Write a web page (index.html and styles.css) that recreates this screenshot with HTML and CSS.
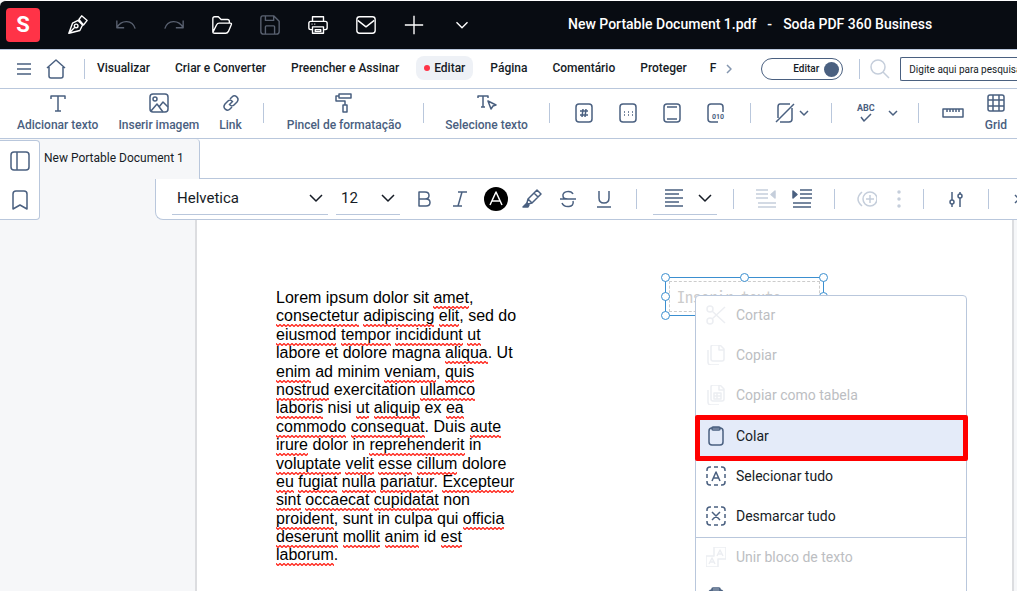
FILE: index.html
```html
<!DOCTYPE html>
<html lang="pt">

<head>
	<meta charset="UTF-8">
	<meta name="viewport" content="width=device-width, initial-scale=1">
	<title>New Portable Document 1.pdf - Soda PDF 360 Business</title>
	<link rel="stylesheet" href="styles.css">
</head>

<body>
	<header class="titlebar">
		<div class="logo">S</div>
		<div class="quick">
			<button aria-label="Assinar"><svg viewBox="0 0 24 24"><path d="M2 21l4-11 6-3 5 5-3 6zM2 21l6-6M13 6l3-4 6 5-4 5z" /><circle cx="10" cy="13" r="2" /></svg></button>
			<button class="off" aria-label="Desfazer"><svg viewBox="0 0 24 24"><path d="M2 7v8h8M2 15C7 6 19 6 22 16" /></svg></button>
			<button class="off" aria-label="Refazer"><svg viewBox="0 0 24 24"><path d="M22 7v8h-8M22 15C17 6 5 6 2 16" /></svg></button>
			<button aria-label="Abrir"><svg viewBox="0 0 24 24"><path d="M2 20V5q0-2 2-2h4l3 3h7q2 0 2 2v2M2 20l4-8q1-2 3-2h12q2 0 1 2l-3 7q-1 2-3 2H4q-2 0-2-1" /></svg></button>
			<button class="off" aria-label="Salvar"><svg viewBox="0 0 24 24"><path d="M4 2h12l6 6v11q0 3-3 3H5q-3 0-3-3V5q0-3 2-3zM7 2v5h9V2M7 22v-8q0-1 1-1h8q1 0 1 1v8" /></svg></button>
			<button aria-label="Imprimir"><svg viewBox="0 0 24 24"><path d="M6 8V3h12v5M6 17H4q-2 0-2-2v-5q0-2 2-2h16q2 0 2 2v5q0 2-2 2h-2M6 14h12v7H6zM9 17h6v2H9zM5 11h1M8 11h1" /></svg></button>
			<button aria-label="E-mail"><svg viewBox="0 0 24 24"><rect x="2" y="3" width="20" height="18" rx="3" /><path d="M3 7l9 7 9-7" /></svg></button>
			<button aria-label="Novo"><svg viewBox="0 0 24 24"><path d="M12 2v20M2 12h20" /></svg></button>
			<button aria-label="Mais"><svg viewBox="0 0 24 24"><path d="M6 9l6 6 6-6" /></svg></button>
		</div>
		<div class="title"><span>New Portable Document 1.pdf</span><span>-</span><span>Soda PDF 360 Business</span></div>
	</header>

	<nav class="menubar">
		<button class="tool menu-btn" aria-label="Menu"><svg viewBox="0 0 20 20"><path d="M3 5h14M3 10h14M3 15h14" /></svg></button>
		<button class="tool home-btn" aria-label="Início"><svg viewBox="0 0 20 20"><path d="M1 9l9-8 9 8M3 8v9q0 2 2 2h10q2 0 2-2V8" /></svg></button>
		<span class="sep"></span>
		<div class="menus">
			<a href="#">Visualizar</a>
			<a href="#">Criar e Converter</a>
			<a href="#">Preencher e Assinar</a>
			<a href="#" class="current">Editar</a>
			<a href="#">Página</a>
			<a href="#">Comentário</a>
			<a href="#">Proteger</a>
			<a href="#">F</a>
		</div>
		<button class="tool more" aria-label="Próximo"><svg viewBox="0 0 8 20"><path d="M1 6l4 4-4 4" /></svg></button>
		<label class="switch">Editar<input type="checkbox" checked></label>
		<span class="sep"></span>
		<label class="search" for="search"><svg viewBox="0 0 20 20"><circle cx="8" cy="8" r="7" /><path d="M13 13l6 6" /></svg></label>
		<input id="search" class="search-box" type="text" placeholder="Digite aqui para pesquisar">
	</nav>

	<div class="toolbar">
		<button class="labelled"><svg viewBox="0 0 20 20"><path d="M3 6V3h14v3M10 3v15M7 18h6" /></svg>Adicionar texto</button>
		<button class="labelled"><svg viewBox="0 0 20 20"><rect x="1" y="1" width="18" height="18" rx="3" /><circle cx="6" cy="6" r="2" /><path d="M2 18l6-7 6 8M10 14l4-5 5 5" /></svg>Inserir imagem</button>
		<button class="labelled"><svg viewBox="0 0 20 20"><path d="M9 6l2-2c3-3 8 1 5 5l-3 3c-1 1-3 1-4 0M11 14l-2 2c-3 3-8-1-5-5l3-3c1-1 3-1 4 0M8 12l4-4" /></svg>Link</button>
		<span class="sep"></span>
		<button class="labelled wide"><svg viewBox="0 0 20 20"><path d="M5 1h12v4H5zM5 3H2v5h9v4M9 12h4v7H9z" /></svg>Pincel de formatação</button>
		<span class="sep"></span>
		<button class="labelled"><svg viewBox="0 0 20 20"><path d="M1 5V3h10v2M6 3v11M4 14h4M11 8l8 4-3 1-2 3z" /></svg>Selecione texto</button>
		<span class="sep"></span>
		<div class="page-tools">
			<button aria-label="Número de página"><svg viewBox="0 0 20 20"><rect x="2" y="1" width="16" height="18" rx="3" /><path d="M9 6l-1 8M12 6l-1 8M6 8h8M6 12h8" /></svg></button>
			<button aria-label="Marca d'água"><svg viewBox="0 0 20 20"><rect x="2" y="1" width="16" height="18" rx="3" /><path class="dots" d="M6 9h9M6 12h9" /></svg></button>
			<button aria-label="Cabeçalho e rodapé"><svg viewBox="0 0 20 20"><rect x="2" y="1" width="16" height="18" rx="3" /><path d="M5 4h10M5 16h10" /></svg></button>
			<button aria-label="Numeração Bates"><svg viewBox="0 0 20 20"><path d="M17 9V4q0-3-3-3H5Q2 1 2 4v12q0 3 3 3h7" /><text x="6" y="16">010</text></svg></button>
		</div>
		<span class="sep"></span>
		<button class="with-arrow" aria-label="Fundo"><svg viewBox="0 0 20 20"><path d="M1 19L19 1M15 1H5Q3 1 3 4v11M17 5v11q0 3-3 3H5" /></svg><svg class="arrow" viewBox="0 0 10 10"><path d="M1 3l4 4 4-4" /></svg></button>
		<span class="sep"></span>
		<button class="with-arrow spelling" aria-label="Ortografia"><svg viewBox="0 0 20 20"><text x="1" y="8" class="abc">ABC</text><path d="M5 14l3 4 7-7" /></svg><svg class="arrow" viewBox="0 0 10 10"><path d="M1 3l4 4 4-4" /></svg></button>
		<span class="sep"></span>
		<button class="ruler" aria-label="Régua"><svg viewBox="0 0 22 20"><path d="M1 6h20v8H1zM5 6v3M8 6v3M11 6v3M14 6v3M17 6v3" /></svg></button>
		<button class="labelled grid-btn"><svg viewBox="0 0 20 20"><rect x="2" y="2" width="16" height="16" rx="2" /><path d="M7 2v16M13 2v16M2 7h16M2 13h16" /></svg>Grid</button>
	</div>

	<main class="workspace">
		<aside class="side">
			<button aria-label="Painel"><svg viewBox="0 0 20 20"><rect x="1" y="1" width="18" height="18" rx="3" /><path d="M7 1v18" /></svg></button>
			<button aria-label="Marcadores"><svg viewBox="0 0 20 20"><path d="M3 19V4q0-3 3-3h8q3 0 3 3v15l-7-4z" /></svg></button>
		</aside>
		<div class="main">
			<div class="tabs">
				<a href="#" class="tab">New Portable Document 1</a>
				<div class="tabs-rest"></div>
			</div>
			<div class="format">
				<label class="pick font"><select aria-label="Fonte"><option>Helvetica</option></select><svg viewBox="0 0 14 14"><path d="M1 4l6 6 6-6" /></svg></label>
				<label class="pick size"><select aria-label="Tamanho"><option>12</option></select><svg viewBox="0 0 14 14"><path d="M1 4l6 6 6-6" /></svg></label>
				<div class="styles">
					<button aria-label="Negrito"><svg viewBox="0 0 20 20"><path d="M5 3h6q4 0 4 3.500T11 10H5zM5 10h7q4 0 4 3.500T12 17H5z" /></svg></button>
					<button aria-label="Itálico"><svg viewBox="0 0 20 20"><path d="M8 3h9M3 17h9M12 3L8 17" /></svg></button>
					<button aria-label="Cor do texto"><svg class="color" viewBox="0 0 24 24"><circle cx="12" cy="12" r="12" /><path d="M6 18l6-13 6 13M8 14h8" /></svg></button>
					<button aria-label="Realce"><svg viewBox="0 0 20 20"><path d="M6 10l9-9 4 4-9 9zM6 10l-1 4 1 1 4-1M12 4l4 4" /><path class="solid" d="M1 18l4-4 2 2-1 2z" /></svg></button>
					<button aria-label="Tachado"><svg viewBox="0 0 20 20"><path d="M15 5c-2-4-11-3-10 2 0 2 2 3 5 3M15 12c2 7-9 7-11 2M2 10h16" /></svg></button>
					<button aria-label="Sublinhado"><svg viewBox="0 0 20 20"><path d="M5 2v7q0 5 5 5t5-5V2M3 18h14" /></svg></button>
				</div>
				<span class="sep"></span>
				<button class="pick align" aria-label="Alinhar"><svg class="lines" viewBox="0 0 20 20"><path d="M1 2h18M1 6h14M1 10h18M1 14h14M1 18h18" /></svg><svg viewBox="0 0 14 14"><path d="M1 4l6 6 6-6" /></svg></button>
				<span class="sep"></span>
				<div class="styles">
					<button class="faded" aria-label="Diminuir recuo"><svg viewBox="0 0 20 20"><path d="M0 1h12M0 5h12M0 9h12M2 14h18M2 18h18" /><path class="solid" d="M19 2v7l-4-3.500z" /></svg></button>
					<button aria-label="Aumentar recuo"><svg viewBox="0 0 20 20"><path d="M8 1h12M8 5h12M8 9h12M1 14h18M1 18h18" /><path class="solid" d="M1 2v7l4-3.500z" /></svg></button>
				</div>
				<span class="sep"></span>
				<div class="styles extra">
					<button class="faded" aria-label="Adicionar"><svg viewBox="0 0 20 20"><circle cx="13" cy="10" r="7" /><path d="M13 6v8M9 10h8M5 3q-8 7 0 14" /></svg></button>
					<button class="faded" aria-label="Opções"><svg viewBox="0 0 20 20"><g class="solid"><circle cx="10" cy="3" r="1" /><circle cx="10" cy="10" r="1" /><circle cx="10" cy="17" r="1" /></g></svg></button>
				</div>
				<span class="sep"></span>
				<button class="sliders" aria-label="Propriedades"><svg viewBox="0 0 20 20"><path d="M6 3v8M6 15v3M14 3v2M14 9v9" /><circle cx="6" cy="13" r="2" /><circle cx="14" cy="7" r="2" /></svg></button>
				<span class="sep"></span>
				<button class="overflow" aria-label="Mais opções"><svg viewBox="0 0 20 20"><path d="M1 6l4 4-4 4M7 6l4 4-4 4" /></svg></button>
			</div>
			<article class="page">
				<p class="text">Lorem ipsum dolor sit <u>amet</u>, <u>consectetur</u> <u>adipiscing</u> <u>elit</u>, sed do <u>eiusmod</u> <u>tempor</u> <u>incididunt</u> <u>ut</u> labore et dolore magna <u>aliqua</u>. Ut <u>enim</u> ad minim <u>veniam</u>, <u>quis</u> <u>nostrud</u> exercitation <u>ullamco</u> <u>laboris</u> nisi <u>ut</u> <u>aliquip</u> ex <u>ea</u> <u>commodo</u> <u>consequat</u>. Duis <u>aute</u> <u>irure</u> dolor in <u>reprehenderit</u> in <u>voluptate</u> <u>velit</u> <u>esse</u> <u>cillum</u> dolore <u>eu</u> <u>fugiat</u> <u>nulla</u> <u>pariatur</u>. <u>Excepteur</u> <u>sint</u> <u>occaecat</u> <u>cupidatat</u> non <u>proident</u>, sunt in culpa qui <u>officia</u> <u>deserunt</u> <u>mollit</u> <u>anim</u> id <u>est</u> <u>laborum</u>.</p>

				<div class="frame">
					<div class="frame-text">Inserir texto</div>
					<i class="tl"></i><i class="tc"></i><i class="tr"></i>
					<i class="ml"></i><i class="mr"></i><i class="bl"></i>
				</div>

				<div class="context" role="menu">
					<button role="menuitem" disabled><svg viewBox="0 0 20 20"><circle cx="4" cy="4" r="3" /><circle cx="4" cy="16" r="3" /><path d="M6 6l13 12M6 14L19 2" /></svg>Cortar</button>
					<button role="menuitem" disabled><svg viewBox="0 0 20 20"><path d="M7 0h7l4 4v10q0 2-2 2H7q-2 0-2-2V2q0-2 2-2zM13 0v5h5M2 5v12q0 3 3 3h8" /></svg>Copiar</button>
					<button role="menuitem" disabled><svg viewBox="0 0 20 20"><path d="M7 0h7l4 4v10q0 2-2 2H7q-2 0-2-2V2q0-2 2-2zM13 0v5h5M2 5v12q0 3 3 3h8M8 8h7v6H8zM11 8v6M8 11h7" /></svg>Copiar como tabela</button>
					<button role="menuitem" class="active"><svg viewBox="0 0 20 20"><rect x="3" y="2" width="14" height="17" rx="3" /><rect x="6" y="1" width="8" height="3" rx="1" /></svg>Colar</button>
					<button role="menuitem"><svg viewBox="0 0 20 20"><path d="M1 5V4q0-3 3-3h1M8 1h4M15 1h1q3 0 3 3v1M19 8v4M19 15v1q0 3-3 3h-1M12 19H8M5 19H4q-3 0-3-3v-1M1 12V8M6 15l4-9 4 9M7 12h6" /></svg>Selecionar tudo</button>
					<button role="menuitem"><svg viewBox="0 0 20 20"><path d="M1 5V4q0-3 3-3h1M8 1h4M15 1h1q3 0 3 3v1M19 8v4M19 15v1q0 3-3 3h-1M12 19H8M5 19H4q-3 0-3-3v-1M1 12V8M6 6l8 8M14 6l-8 8" /></svg>Desmarcar tudo</button>
					<hr>
					<button role="menuitem" disabled><svg viewBox="0 0 20 20"><path d="M0 9h8V0h12v12h-8v8H0zM3 17l3-6 3 6M4 15h4M11 9l3-6 3 6M12 7h4" /></svg>Unir bloco de texto</button>
					<button role="menuitem" aria-label="Propriedades"><svg viewBox="0 0 20 20"><rect x="3" y="3" width="14" height="16" rx="3" /><rect x="6" y="1" width="8" height="4" rx="1" /></svg></button>
				</div>
			</article>
		</div>
	</main>
</body>

</html>
```
FILE: styles.css
```css
* {
	box-sizing: border-box;
}

body {
	margin: 0;
	height: 100vh;
	display: flex;
	flex-direction: column;
	overflow: hidden;
	background: #f6f7f9;
	color: #161c26;
	font: 12px/16px Roboto, "Liberation Sans", sans-serif;
}

button {
	display: flex;
	align-items: center;
	justify-content: center;
	flex-shrink: 0;
	margin: 0;
	padding: 0;
	border: 0;
	background: none;
	color: #4a6080;
	font: inherit;
}

a {
	color: inherit;
	text-decoration: none;
}

svg {
	display: block;
	flex-shrink: 0;
	width: 20px;
	height: 20px;
	fill: none;
	stroke: currentColor;
	stroke-width: 1.5;
	stroke-linejoin: round;
}

svg text {
	fill: currentColor;
	stroke: none;
	font-size: 7px;
	font-weight: 700;
}

svg .abc {
	font-size: 9px;
}

svg .solid {
	fill: currentColor;
}

svg .dots {
	stroke-dasharray: 1 3;
}

.sep {
	flex-shrink: 0;
	width: 1px;
	height: 20px;
	background: #b9c7dc;
}

/* title bar */

.titlebar {
	display: flex;
	align-items: center;
	flex-shrink: 0;
	height: 49px;
	padding-left: 6px;
	border-top: 1px solid #fff;
	border-top-left-radius: 6px;
	background: #080c12;
	color: #fff;
	white-space: nowrap;
}

.logo {
	flex-shrink: 0;
	width: 34px;
	border-radius: 4px;
	background: #ff3347;
	font-size: 22px;
	font-weight: 700;
	line-height: 34px;
	text-align: center;
}

.quick {
	display: flex;
	margin-left: 14px;
}

.quick button {
	width: 48px;
	height: 48px;
	color: #fff;
}

.quick svg {
	width: 22px;
	height: 22px;
}

.quick .off {
	color: #596170;
}

.title {
	display: flex;
	gap: 11px;
	margin-left: 82px;
	padding-bottom: 2px;
	font-size: 14px;
	font-weight: 500;
}

/* menu bar */

.menubar {
	display: flex;
	align-items: center;
	flex-shrink: 0;
	height: 40px;
	border: solid #b9c7dc;
	border-width: 1px 0;
	background: #fff;
	white-space: nowrap;
}

.menu-btn {
	margin-left: 14px;
}

.home-btn {
	margin: 0 18px 0 12px;
}

.menus {
	display: flex;
	flex-shrink: 0;
	gap: 1px;
	padding-bottom: 2px;
}

.menus a {
	padding: 0 12px;
	font-weight: 500;
	line-height: 24px;
}

.menus a:last-child {
	padding: 0 10px;
}

.menus .current {
	display: flex;
	align-items: center;
	gap: 4px;
	margin: 0 4px;
	padding: 0 8px;
	border-radius: 8px;
	background: #eef1f6;
}

.current::before {
	content: "";
	width: 6px;
	height: 6px;
	border-radius: 50%;
	background: #ff3347;
}

.more {
	margin-right: 27px;
	color: #8496af;
}

.more svg {
	width: 8px;
}

.switch {
	display: flex;
	align-items: center;
	justify-content: flex-end;
	gap: 5px;
	flex-shrink: 0;
	width: 82px;
	height: 22px;
	margin-right: 16px;
	padding-right: 3px;
	border: 1px solid #4a6080;
	border-radius: 11px;
	font-size: 10px;
	font-weight: 500;
}

.switch input {
	appearance: none;
	width: 15px;
	height: 15px;
	margin: 0;
	border-radius: 50%;
	background: #4a6080;
}

.search {
	margin: 0 10px;
	color: #c5cedb;
}

.search-box {
	flex: 1;
	min-width: 117px;
	height: 24px;
	padding: 0 0 0 8px;
	border: 1px solid #4a6080;
	border-right: 0;
	border-radius: 2px 0 0 2px;
	font: 10px Roboto, sans-serif;
}

.search-box::placeholder {
	color: #161c26;
}

/* ribbon */

.toolbar {
	display: flex;
	align-items: center;
	flex-shrink: 0;
	height: 50px;
	padding: 0 0 2px 7px;
	border-bottom: 1px solid #b9c7dc;
	background: #fff;
	white-space: nowrap;
}

.toolbar > .sep {
	margin: 0 11px;
}

.labelled {
	flex-direction: column;
	gap: 4px;
	padding: 0 10px;
	font-weight: 500;
}

.wide {
	padding: 0 11px 0 12px;
}

.page-tools {
	display: flex;
	gap: 24px;
	padding: 0 13px;
}

.with-arrow {
	gap: 4px;
	padding: 0 11px 0 13px;
}

.with-arrow .arrow {
	width: 10px;
	height: 10px;
}

.spelling {
	gap: 12px;
	padding: 0 9px 0 13px;
}

.ruler {
	padding: 0 11px 0 12px;
}

.ruler svg {
	width: 22px;
}

/* side panel and document tabs */

.workspace {
	display: flex;
	flex: 1;
	min-height: 0;
}

.side {
	display: flex;
	flex-direction: column;
	flex-shrink: 0;
	align-self: flex-start;
	width: 40px;
	margin-top: 1px;
	border: 1px solid #b9c7dc;
	border-left: 0;
	border-radius: 0 4px 4px 0;
	background: #fff;
}

.side button {
	height: 39px;
}

.main {
	display: flex;
	flex-direction: column;
	flex: 1;
	min-width: 0;
}

.tabs {
	display: flex;
	flex-shrink: 0;
	height: 40px;
	background: #fff;
}

.tab {
	flex-shrink: 0;
	padding: 0 15px 0 4px;
	border-right: 1px solid #b9c7dc;
	border-top-right-radius: 4px;
	background: #f6f7f9;
	font-size: 12px;
	line-height: 38px;
}

.tabs-rest {
	flex: 1;
	border-bottom: 1px solid #b9c7dc;
}

/* text format bar */

.format {
	display: flex;
	align-items: center;
	flex-shrink: 0;
	height: 41px;
	margin-left: 115px;
	padding-left: 16px;
	overflow: hidden;
	border: solid #b9c7dc;
	border-width: 0 0 1px 1px;
	border-bottom-left-radius: 8px;
	background: #fff;
}

.pick {
	display: flex;
	align-items: center;
	align-self: flex-end;
	justify-content: space-between;
	flex-shrink: 0;
	height: 34px;
	margin-bottom: 4px;
	padding: 0 5px;
	border-bottom: 1px solid #b9c7dc;
	color: #161c26;
}

.pick svg {
	width: 14px;
	height: 14px;
}

.pick select {
	appearance: none;
	flex: 1;
	min-width: 0;
	padding: 0;
	border: 0;
	background: none;
	color: inherit;
	font: 15px/20px Roboto, sans-serif;
}

.font {
	width: 156px;
	margin-right: 8px;
}

.size {
	width: 64px;
	margin-right: 6px;
}

.align {
	width: 64px;
	margin-left: 16px;
	margin-right: 16px;
	padding-left: 11px;
}

.align .lines {
	width: 20px;
	height: 20px;
	color: #4a6080;
}

.styles {
	display: flex;
}

.styles button {
	width: 36px;
}

.styles + .sep {
	margin-left: 14px;
}

.align + .sep {
	margin-right: 14px;
}

.faded {
	color: #c5cedb;
}

.styles .color {
	width: 24px;
	height: 24px;
	color: #fff;
}

.color circle {
	fill: #000;
	stroke: none;
}

.extra {
	margin-left: 14px;
}

.extra button {
	width: 28px;
}

.extra button:first-child {
	width: 36px;
}

.extra + .sep {
	margin-left: 10px;
}

.sliders {
	margin: 0 22px;
}

.overflow {
	margin-left: 25px;
}

/* document */

.page {
	position: relative;
	flex: 1;
	min-height: 0;
	margin: 0 3px 0 155px;
	padding: 69px 79px;
	border: solid #dcdde0;
	border-width: 0 2px;
	background: #fff;
}

.text {
	width: 244px;
	margin: 0;
	color: #000;
	font: 16px/1.15 "Liberation Sans", Arial, sans-serif;
}

.text u {
	padding-bottom: 3px;
	background: url("data:image/svg+xml,%3Csvg xmlns='http://www.w3.org/2000/svg' width='4' height='3'%3E%3Cpath d='M-1 -.5L0 .5L2 2.500L4 .5L5 -.5' fill='none' stroke='%23ff2a20' stroke-width='1.300'/%3E%3C/svg%3E") left bottom repeat-x;
	text-decoration: none;
}

.frame {
	position: absolute;
	left: 468px;
	top: 57px;
	width: 159px;
	height: 39px;
	padding: 3px;
	border: 1px solid #3b8fd0;
}

.frame-text {
	height: 100%;
	padding-left: 7px;
	border: 1px dashed #ccc;
	color: #ccc;
	font: 300 16px/29px "Noto Sans Mono CJK JP", "Liberation Mono", monospace;
}

.frame i {
	position: absolute;
	width: 9px;
	height: 9px;
	border: 1px solid #3b8fd0;
	border-radius: 50%;
	background: #fff;
}

.tl, .tc, .tr {
	top: -5px;
}

.ml, .mr {
	top: 14px;
}

.tl, .ml, .bl {
	left: -5px;
}

.tc {
	left: 74px;
}

.tr, .mr {
	right: -5px;
}

.bl {
	bottom: -5px;
}

.context {
	position: absolute;
	left: 498px;
	top: 75px;
	width: 272px;
	border: 1px solid #b9c7dc;
	border-radius: 4px;
	background: #fff;
}

.context button {
	justify-content: flex-start;
	gap: 10px;
	width: 100%;
	height: 40px;
	padding: 0 0 2px 10px;
	color: #161c26;
	font-size: 14px;
}

.context svg {
	color: #4a6080;
}

.context button:disabled {
	color: #bcbec2;
}

.context button:disabled svg {
	color: #eceef2;
}

.context .active {
	position: relative;
	height: 41px;
	background: #e4ebf9;
}

/* highlight drawn round the active entry */
.context .active::after {
	content: "";
	position: absolute;
	inset: -1px -2px -4px -1px;
	border: 5px solid #f00;
	border-radius: 2px;
}

.context hr {
	margin: 0;
	border: 0;
	border-top: 1px solid #b9c7dc;
}
```
